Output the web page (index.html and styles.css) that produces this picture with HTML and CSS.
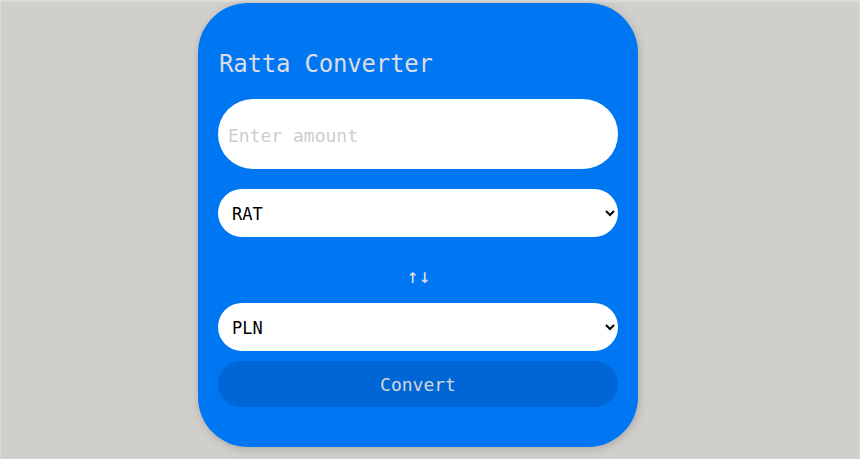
FILE: index.html
```html
<!DOCTYPE html>
<html>
<head>
<meta charset="utf-8">
<link rel="stylesheet" href="styles.css">
</head>
<body>
<div class="page">
  <div class="card">
    <h1 class="title">Ratta Converter</h1>
    <input class="amount" type="text" placeholder="Enter amount">
    <select class="currency"><option>RAT</option></select>
    <div class="swap">↑↓</div>
    <select class="currency"><option>PLN</option></select>
    <button class="convert">Convert</button>
  </div>
</div>
</body>
</html>
```
FILE: styles.css
```css
html, body {
  margin: 0;
  padding: 0;
  height: 100%;
  background: #d0cfcb;
}
.page {
  box-sizing: border-box;
  height: 100%;
  border-top: 2px solid #dcdbd8;
  border-left: 1px solid #dcdbd8;
  border-right: 1px solid #dcdbd8;
  padding: 1px 0 0 197px;
  font-family: "DejaVu Sans Mono", "Liberation Mono", monospace;
}
.card {
  box-sizing: border-box;
  width: 440px;
  height: 444px;
  background: #0077f2;
  border-radius: 50px;
  box-shadow: 1px 2px 8px rgba(0,0,0,0.18);
  padding: 47px 20px 40px;
  display: flex;
  flex-direction: column;
}
.title {
  margin: 0 0 21px;
  font-size: 24px;
  line-height: 28px;
  font-weight: normal;
  color: #dcdce4;
  padding-left: 1px;
  letter-spacing: -0.2px;
}
.amount {
  box-sizing: border-box;
  height: 70px;
  border: none;
  border-radius: 35px;
  background: #fff;
  padding: 2px 10px 0;
  font-family: inherit;
  font-size: 18px;
  outline: none;
  margin-bottom: 20px;
}
.amount::placeholder {
  color: #cfcdc8;
}
.currency {
  box-sizing: border-box;
  height: 48px;
  border: none;
  border-radius: 24px;
  background: #fff;
  padding: 1px 10px 0;
  font-family: "DejaVu Sans Mono", monospace;
  font-size: 17px;
  color: #000;
}
.swap {
  text-align: center;
  color: #dcdce4;
  font-size: 20px;
  line-height: 20px;
  margin: 29px 0 17px;
  padding-left: 1px;
}
.convert {
  margin-top: 10px;
  height: 46px;
  border: none;
  border-radius: 23px;
  background: #0066d6;
  color: #d6d6dc;
  font-family: inherit;
  font-size: 18px;
  padding-top: 2px;
}
```
